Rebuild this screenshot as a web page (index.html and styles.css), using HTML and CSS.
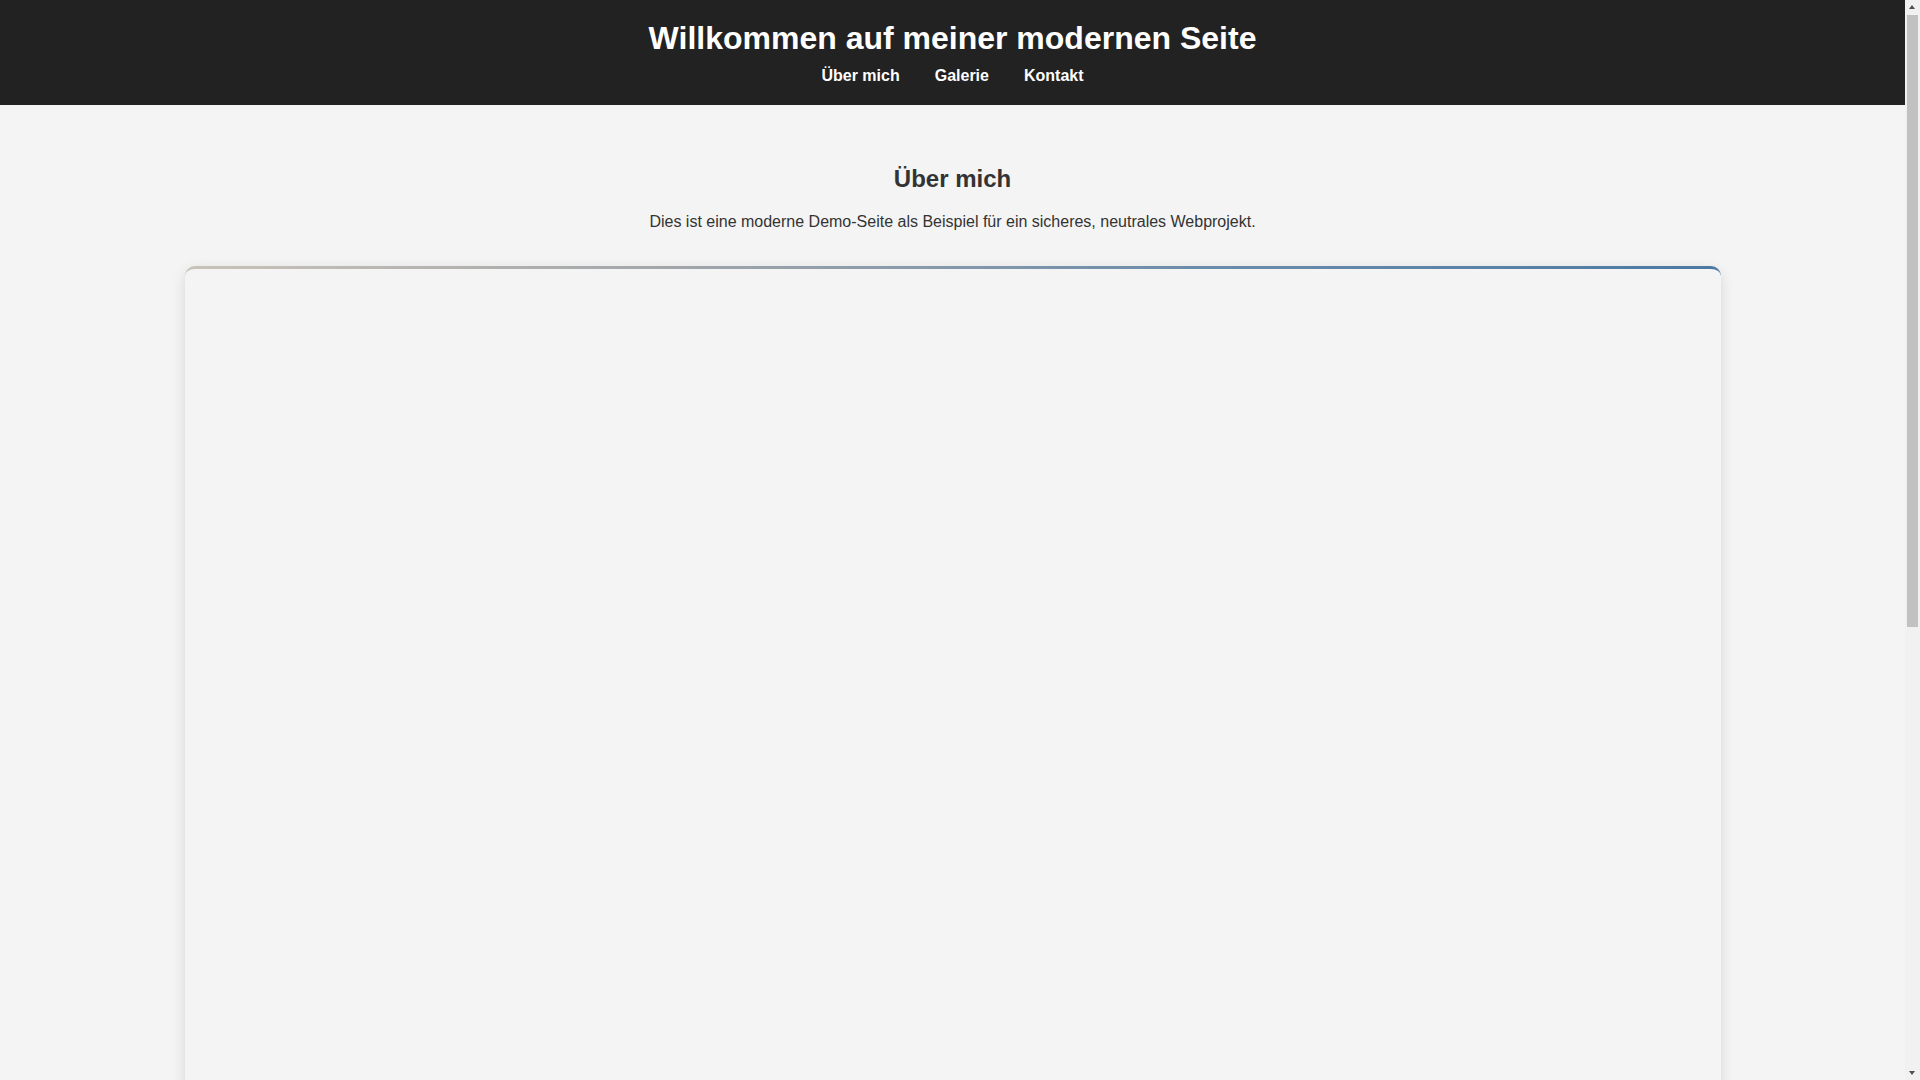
FILE: index.html
```html
<!DOCTYPE html>
<html lang="de">
<head>
<meta charset="utf-8">
<title>Willkommen auf meiner modernen Seite</title>
<link rel="stylesheet" href="styles.css">
</head>
<body>
<header class="site-header">
  <h1 class="site-title">Willkommen auf meiner modernen Seite</h1>
  <nav class="site-nav">
    <a href="#about">Über mich</a>
    <a href="#gallery">Galerie</a>
    <a href="#contact">Kontakt</a>
  </nav>
</header>
<main class="main">
  <section class="about" id="about">
    <h2 class="section-title">Über mich</h2>
    <p class="section-text">Dies ist eine moderne Demo-Seite als Beispiel für ein sicheres, neutrales Webprojekt.</p>
    <div class="card"></div>
  </section>
</main>
<div class="fake-scrollbar" aria-hidden="true">
  <div class="sb-arrow sb-up"></div>
  <div class="sb-track"><div class="sb-thumb"></div></div>
  <div class="sb-arrow sb-down"></div>
</div>
</body>
</html>
```

FILE: styles.css
```css
html, body {
  margin: 0;
  padding: 0;
}
body {
  background: #f4f4f4;
  color: #333;
  font-family: "Liberation Sans", Arial, sans-serif;
  padding-right: 15px;
}
.site-header {
  background: #222;
  color: #fff;
  padding: 20px;
  text-align: center;
}
.site-title {
  margin: 0 0 10px;
  font-size: 32px;
  font-weight: bold;
  line-height: normal;
}
.site-nav {
  display: flex;
  justify-content: center;
  gap: 35px;
  line-height: 18px;
}
.site-nav a {
  color: #fff;
  text-decoration: none;
  font-weight: bold;
  font-size: 16px;
}
.main {
  max-width: 1600px;
  margin: 0 auto;
  padding: 40px 32px 40px;
  box-sizing: border-box;
}
.about {
  text-align: center;
}
.section-title {
  margin: 20px 0;
  font-size: 24px;
  font-weight: bold;
  line-height: normal;
  color: #333;
}
.section-text {
  margin: 0 0 35px;
  font-size: 16px;
  line-height: normal;
  color: #333;
}
.card {
  height: 1500px;
  border-radius: 10px;
  background: #f4f4f4;
  box-shadow: 0 4px 14px rgba(0, 0, 0, 0.12);
  border-top: 3px solid transparent;
  background-image: linear-gradient(#f4f4f4, #f4f4f4), linear-gradient(90deg, #c9c2b8 0%, #a4a7aa 30%, #6c8cab 65%, #4b79a3 100%);
  background-origin: border-box;
  background-clip: padding-box, border-box;
}
.fake-scrollbar {
  position: fixed;
  top: 0;
  right: 0;
  bottom: 0;
  width: 15px;
  background: #f1f1f1;
  display: flex;
  flex-direction: column;
}
.sb-arrow {
  height: 15px;
  flex: none;
  position: relative;
}
.sb-up::after, .sb-down::after {
  content: "";
  position: absolute;
  left: 4px;
  border-left: 3.5px solid transparent;
  border-right: 3.5px solid transparent;
}
.sb-up::after {
  top: 5px;
  border-bottom: 4px solid #505050;
}
.sb-down::after {
  top: 6px;
  border-top: 4px solid #505050;
}
.sb-track {
  flex: 1;
  padding: 0 2px;
}
.sb-thumb {
  height: 612px;
  background: #c1c1c1;
  border-radius: 0;
}
```
